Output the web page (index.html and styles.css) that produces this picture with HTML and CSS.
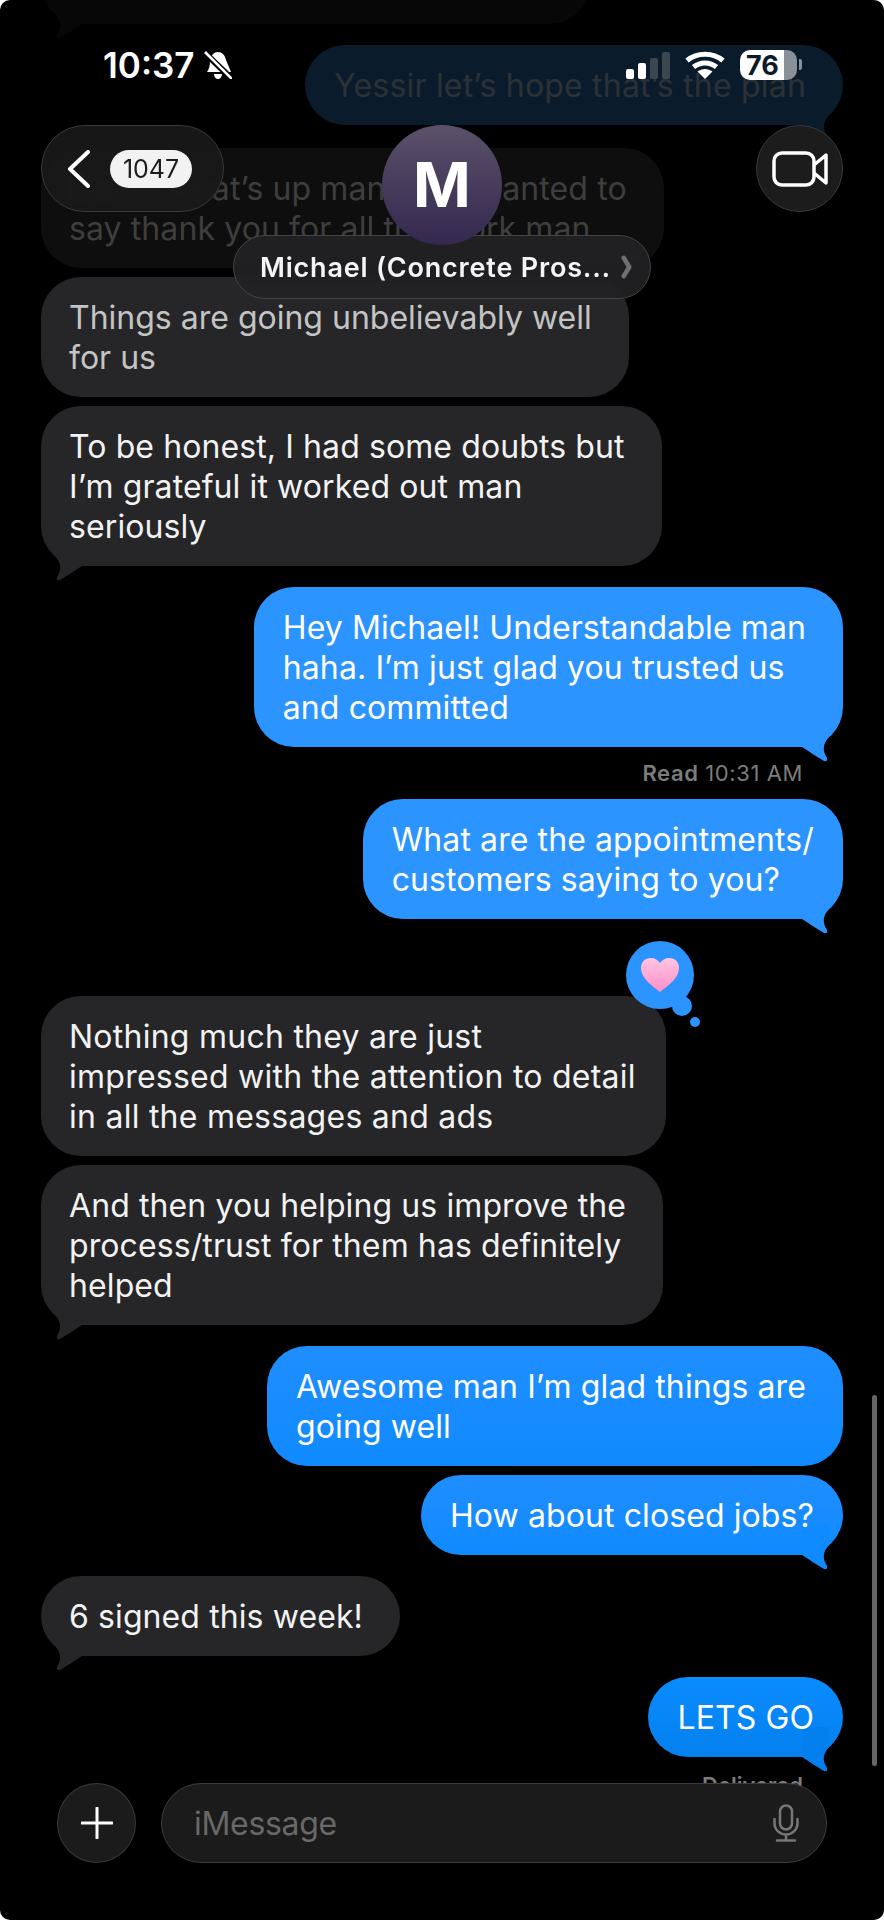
FILE: index.html
```html
<!DOCTYPE html>
<html lang="en">

<head>
    <meta charset="UTF-8">
    <meta name="viewport" content="width=device-width, initial-scale=1.0">
    <title>Messages</title>
    <link rel="stylesheet" href="styles.css">
</head>

<body>
    <svg class="defs" width="0" height="0">
        <symbol id="tail" viewBox="0 0 48 48">
            <path d="M7 30C15 35 22 40 29 44Q33 45 32 41C27 33 28 27 34 20V0H7Z" />
        </symbol>
    </svg>

    <div class="screen">
        <div class="thread">
            <div class="msg in ghost-top">
                <div class="bubble">
                    <svg class="tail"><use href="#tail" /></svg>
                </div>
            </div>
            <div class="msg out ghost-blue">
                <div class="bubble wide">Yessir let’s hope that’s the plan
                    <svg class="tail"><use href="#tail" /></svg>
                </div>
            </div>
            <div class="msg in ghost-grey gap-top">
                <div class="bubble wide">Damn what’s up man I just wanted to<br>say thank you for all the work man</div>
            </div>
            <div class="msg in dim same">
                <div class="bubble wide">Things are going unbelievably well<br>for us</div>
            </div>
            <div class="msg in same">
                <div class="bubble wide">To be honest, I had some doubts but<br>I’m grateful it worked out man<br>seriously
                    <svg class="tail"><use href="#tail" /></svg>
                </div>
            </div>
            <div class="msg out">
                <div class="bubble wide">Hey Michael! Understandable man<br>haha. I’m just glad you trusted us<br>and committed
                    <svg class="tail"><use href="#tail" /></svg>
                </div>
            </div>
            <div class="receipt"><b>Read</b> 10:31 AM</div>
            <div class="msg out after-receipt">
                <div class="bubble">What are the appointments/<br>customers saying to you?
                    <svg class="tail"><use href="#tail" /></svg>
                </div>
            </div>
            <div class="msg in after-reaction loose">
                <div class="bubble">Nothing much they are just<br>impressed with the attention to detail<br>in all the messages and ads
                    <div class="reaction">
                        <svg class="heart" viewBox="0 0 38 34">
                            <defs>
                                <linearGradient id="pink" x1="0" y1="0" x2="0" y2="1">
                                    <stop offset="0" stop-color="#ffc4e2" />
                                    <stop offset="1" stop-color="#ff8fc6" />
                                </linearGradient>
                            </defs>
                            <path fill="url(#pink)" d="M19 34C13 29 0 21 0 10 0 4 4 0 10 0 14 0 17 2 19 5 21 2 24 0 28 0 34 0 38 4 38 10 38 21 25 29 19 34Z" />
                        </svg>
                        <span class="dot-big"></span>
                        <span class="dot-small"></span>
                    </div>
                </div>
            </div>
            <div class="msg in same">
                <div class="bubble wide">And then you helping us improve the<br>process/trust for them has definitely<br>helped
                    <svg class="tail"><use href="#tail" /></svg>
                </div>
            </div>
            <div class="msg out deep">
                <div class="bubble wide">Awesome man I’m glad things are<br>going well</div>
            </div>
            <div class="msg out deep same">
                <div class="bubble">How about closed jobs?
                    <svg class="tail"><use href="#tail" /></svg>
                </div>
            </div>
            <div class="msg in">
                <div class="bubble wide">6 signed this week!
                    <svg class="tail"><use href="#tail" /></svg>
                </div>
            </div>
            <div class="msg out deepest">
                <div class="bubble">LETS GO
                    <svg class="tail"><use href="#tail" /></svg>
                </div>
            </div>
            <div class="receipt delivered"><b>Delivered</b></div>
        </div>

        <div class="status-bar">
            <div class="status-left">
                <span class="clock">10:37</span>
                <svg class="bell" viewBox="0 0 28 28">
                    <path fill="#fff" d="M14 1C18 1 21 4 22 9L27 21 3 21C5 18 6 15 6 10 7 4 10 1 14 1ZM10 23H18C18 26 16 28 14 28 12 28 10 26 10 23Z" />
                    <path stroke="#000" stroke-width="6" d="M1 2 27 27" />
                    <path stroke="#fff" stroke-width="2.6" d="M1 1 28 28" />
                </svg>
            </div>
            <div class="status-right">
                <div class="signal">
                    <span class="bar b1"></span>
                    <span class="bar b2"></span>
                    <span class="bar b3"></span>
                    <span class="bar b4"></span>
                </div>
                <svg class="wifi" viewBox="0 0 40 28">
                    <path fill="none" stroke="#fff" stroke-width="5" d="M2 9.5C12 1 28 1 38 9.5M8.5 16C15 10.500 25 10.500 31.500 16" />
                    <path fill="#fff" d="M20 28 12.500 20.500C17 17 23 17 27.500 20.500Z" />
                </svg>
                <div class="battery"><span class="battery-level">76</span><span class="battery-nub"></span></div>
            </div>
        </div>

        <div class="nav">
            <div class="back">
                <svg class="chevron" viewBox="0 0 24 38">
                    <path fill="none" stroke="#fff" stroke-width="4" stroke-linecap="round" stroke-linejoin="round" d="M21 2 3 19 21 36" />
                </svg>
                <span class="count">1047</span>
            </div>
            <div class="contact">
                <div class="avatar">M</div>
                <div class="name">Michael (Concrete Pros...
                    <svg class="name-arrow" viewBox="0 0 12 26">
                        <path fill="none" stroke="#6f6f6f" stroke-width="5" stroke-linecap="round" stroke-linejoin="round" d="M3 3 9 13 3 23" />
                    </svg>
                </div>
            </div>
            <div class="video">
                <svg class="video-icon" viewBox="0 0 56 36">
                    <rect x="2" y="2" width="40" height="32" rx="8" fill="none" stroke="#fff" stroke-width="3.500" />
                    <path fill="none" stroke="#fff" stroke-width="3.500" stroke-linejoin="round" d="M42 14 54 4V32L42 22" />
                </svg>
            </div>
        </div>

        <div class="scrollbar"></div>

        <div class="composer">
            <div class="plus">
                <svg class="plus-icon" viewBox="0 0 32 32">
                    <path stroke="#fff" stroke-width="3" stroke-linecap="round" d="M16 1V31M1 16H31" />
                </svg>
            </div>
            <div class="input">
                <span class="placeholder">iMessage</span>
                <svg class="mic" viewBox="0 0 26 38">
                    <rect x="7" y="1.500" width="12" height="24" rx="6" fill="none" stroke="#777" stroke-width="2.500" />
                    <path fill="none" stroke="#777" stroke-width="2.500" stroke-linecap="round" d="M1.500 15V19C1.500 26 7 30.500 13 30.500 19 30.500 24.500 26 24.500 19V15M13 30.500V36.500M4 36.500H22" />
                </svg>
            </div>
        </div>
    </div>
</body>

</html>
```

FILE: styles.css
```css
body {
    margin: 0;
    background: #fff;
    font-family: "Inter", "Liberation Sans", sans-serif;
}

.defs {
    position: absolute;
}

.screen {
    position: relative;
    width: 884px;
    height: 1920px;
    overflow: hidden;
    background: #000;
    border-radius: 10px;
}

/* messages */
.thread {
    display: flex;
    flex-direction: column;
    padding: 0 41px;
    margin-top: -157px;
}

.msg {
    display: flex;
    margin-top: 21px;
    font-size: 32px;
    line-height: 40px;
    letter-spacing: 0.1px;
    white-space: nowrap;
}

.msg.same {
    margin-top: 9px;
}

.msg.gap-top {
    margin-top: 23px;
}

.msg.after-receipt {
    margin-top: 13px;
}

.msg.after-reaction {
    margin-top: 77px;
}

.msg.loose {
    letter-spacing: 0.25px;
}

.msg.loose .bubble {
    padding-right: 30px;
}

.bubble {
    position: relative;
    isolation: isolate;
    padding: 20.5px 29px 19.5px;
    border-radius: 40px;
}

.bubble.wide {
    padding-right: 37px;
}

/* sits behind the text, above the bubble background */
.tail {
    position: absolute;
    z-index: -1;
    right: 0;
    bottom: -18px;
    width: 48px;
    height: 48px;
}

.in {
    justify-content: flex-start;
}

.in .bubble {
    padding-left: 28px;
    background: #262628;
    color: #f2f2f2;
}

.in .tail {
    right: auto;
    left: 0;
    fill: #262628;
    transform: scaleX(-1);
}

.out {
    justify-content: flex-end;
}

.out .bubble {
    background: #2b94ff;
    color: #fff;
}

.out .tail {
    fill: #2b94ff;
}

.out.deep .bubble {
    background: linear-gradient(#1f8eff, #108aff);
}

.out.deep .tail {
    fill: #108aff;
}

.out.deepest .bubble {
    background: linear-gradient(#0a8cff, #0480ee);
}

.out.deepest .tail {
    fill: #0480ee;
}

.in.dim {
    letter-spacing: 0;
}

.in.dim .bubble {
    color: #c4c4c4;
}

.ghost-top .bubble {
    box-sizing: border-box;
    width: 549px;
    height: 160px;
    background: #070707;
}

.ghost-top .tail {
    fill: #070707;
}

.ghost-blue {
    letter-spacing: 0.2px;
}

.ghost-blue .bubble {
    background: #0a1c2c;
    color: #2c3135;
}

.ghost-blue .tail {
    fill: #0a1c2c;
}

.ghost-grey .bubble {
    background: #0e0e0e;
    color: #3e3e3e;
}

.receipt {
    align-self: flex-end;
    margin: 13px 40px 0 0;
    font-size: 22px;
    line-height: 26px;
    letter-spacing: 0.6px;
    color: #7c7c7c;
}

.receipt b {
    font-weight: 600;
}

.delivered {
    margin-top: 15px;
    letter-spacing: 0;
}

.reaction {
    position: absolute;
    top: -55px;
    right: -28px;
    display: flex;
    align-items: center;
    justify-content: center;
    width: 68px;
    height: 68px;
    border-radius: 50%;
    background: #2b94ff;
}

.heart {
    width: 38px;
    height: 34px;
}

.dot-big {
    position: absolute;
    top: 55px;
    left: 46px;
    width: 20px;
    height: 20px;
    border-radius: 50%;
    background: #2b94ff;
}

.dot-small {
    position: absolute;
    top: 76px;
    left: 64px;
    width: 10px;
    height: 10px;
    border-radius: 50%;
    background: #2b94ff;
}

/* status bar */
.status-bar {
    position: absolute;
    top: 48px;
    left: 103px;
    right: 87px;
    display: flex;
    align-items: center;
    justify-content: space-between;
    height: 34px;
    color: #fff;
}

.status-left {
    display: flex;
    align-items: center;
    gap: 10px;
}

.clock {
    font-size: 35px;
    font-weight: 600;
    letter-spacing: 0;
}

.bell {
    width: 28px;
    height: 28px;
}

.status-right {
    display: flex;
    align-items: center;
}

.signal {
    display: flex;
    align-items: flex-end;
    gap: 4px;
    height: 27px;
    margin-right: 15px;
}

.bar {
    width: 8px;
    border-radius: 2px;
    background: #fff;
}

.b1 {
    height: 10px;
}

.b2 {
    height: 16px;
}

.b3 {
    height: 21px;
    background: #3a4650;
}

.b4 {
    height: 27px;
    background: #3a4650;
}

.wifi {
    width: 40px;
    height: 28px;
    margin-right: 15px;
}

.battery {
    position: relative;
    display: flex;
    align-items: center;
    justify-content: center;
    width: 57px;
    height: 30px;
    border-radius: 10px;
    background: linear-gradient(90deg, #fff 77%, #8a9097 77%);
    color: #0a1c2c;
    font-size: 27px;
    font-weight: 700;
}

.battery-level {
    margin-right: 12px;
}

.battery-nub {
    position: absolute;
    top: 9px;
    right: -5px;
    width: 3px;
    height: 11px;
    border-radius: 0 2px 2px 0;
    background: #8a9097;
}

/* nav */
.nav {
    position: absolute;
    top: 125px;
    left: 41px;
    right: 41px;
    display: flex;
    align-items: flex-start;
    justify-content: space-between;
}

.back {
    display: flex;
    align-items: center;
    gap: 19px;
    width: 183px;
    height: 87px;
    padding-left: 25px;
    box-sizing: border-box;
    border: 1px solid #3a3a3a;
    border-radius: 44px;
    background: rgba(26, 26, 26, 0.9);
    backdrop-filter: blur(4px);
}

.chevron {
    width: 24px;
    height: 38px;
}

.count {
    width: 82px;
    height: 38px;
    border-radius: 19px;
    background: #f2f2f2;
    color: #1c1c1c;
    font-size: 25px;
    line-height: 38px;
    text-align: center;
}

.contact {
    position: absolute;
    top: 0;
    left: 192px;
    display: flex;
    flex-direction: column;
    align-items: center;
    width: 418px;
}

.avatar {
    position: relative;
    z-index: 1;
    width: 120px;
    height: 120px;
    border-radius: 50%;
    background: linear-gradient(#5b5169, #34284f);
    color: #fff;
    font-size: 62px;
    font-weight: 700;
    line-height: 120px;
    text-align: center;
}

.name {
    display: flex;
    align-items: center;
    gap: 10px;
    width: 100%;
    height: 64px;
    margin-top: -10px;
    padding-left: 26px;
    box-sizing: border-box;
    border: 1px solid #444;
    border-radius: 32px;
    background: rgba(34, 34, 36, 0.92);
    backdrop-filter: blur(4px);
    color: #f4f4f4;
    font-size: 27px;
    font-weight: 600;
    letter-spacing: 0.8px;
}

.name-arrow {
    width: 11px;
    height: 26px;
}

.video {
    display: flex;
    align-items: center;
    justify-content: center;
    width: 87px;
    height: 87px;
    box-sizing: border-box;
    border: 1px solid #3a3a3a;
    border-radius: 50%;
    background: #1c1c1c;
}

.video-icon {
    width: 56px;
    height: 36px;
}

.scrollbar {
    position: absolute;
    top: 1395px;
    left: 872px;
    width: 5px;
    height: 371px;
    border-radius: 3px;
    background: #666;
}

/* composer */
.composer {
    position: absolute;
    top: 1783px;
    left: 57px;
    display: flex;
    gap: 25px;
}

.plus {
    display: flex;
    align-items: center;
    justify-content: center;
    width: 79px;
    height: 80px;
    box-sizing: border-box;
    border: 1px solid #3a3a3a;
    border-radius: 50%;
    background: #1b1b1b;
}

.plus-icon {
    width: 32px;
    height: 32px;
}

.input {
    display: flex;
    align-items: center;
    justify-content: space-between;
    width: 666px;
    height: 80px;
    padding: 0 27px 0 32px;
    box-sizing: border-box;
    border: 1px solid #3d3d3d;
    border-radius: 40px;
    background: #1b1b1b;
}

.placeholder {
    color: #686868;
    font-size: 32px;
    letter-spacing: -0.3px;
}

.mic {
    width: 26px;
    height: 38px;
}
```
